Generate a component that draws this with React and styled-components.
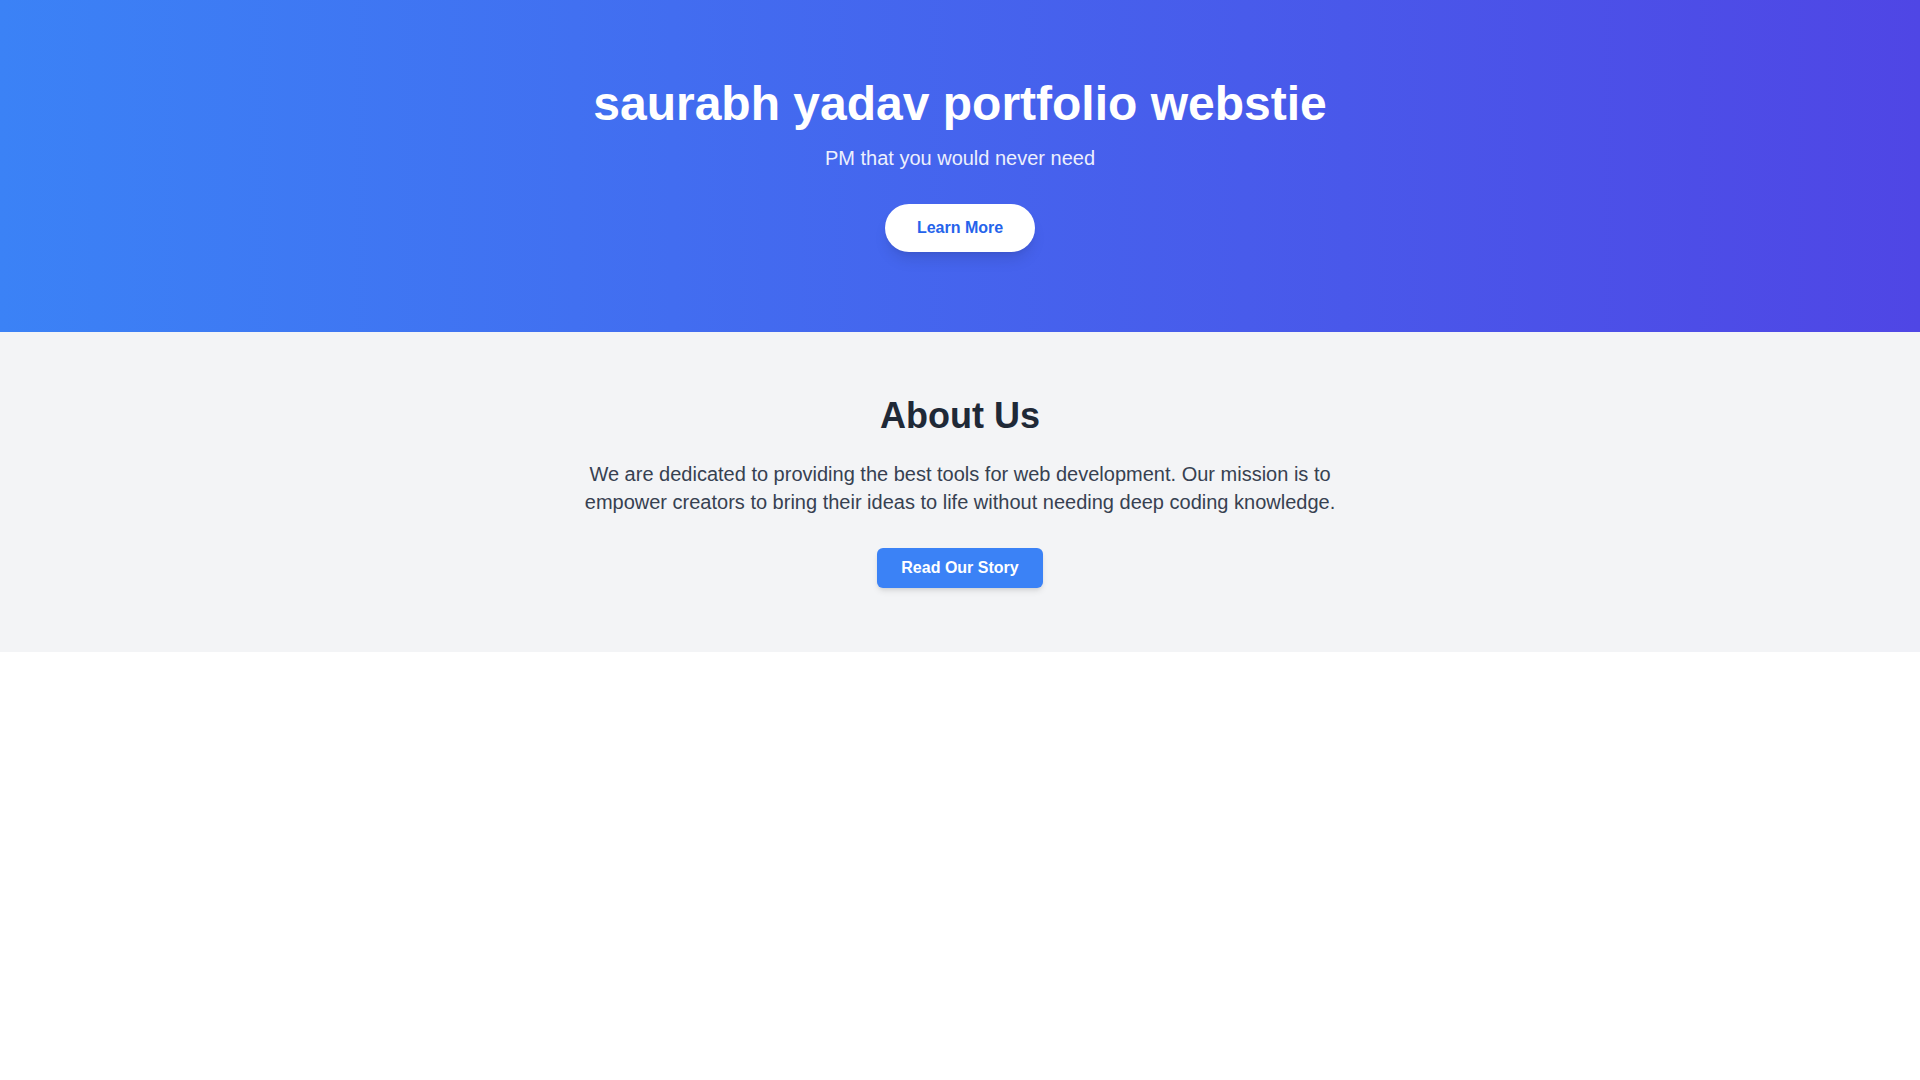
import styled, { createGlobalStyle } from "styled-components";

const GlobalStyle = createGlobalStyle`
  * {
    box-sizing: border-box;
  }
  body {
    margin: 0;
    background: #ffffff;
    font-family: "Liberation Sans", Arial, sans-serif;
  }
`;

const App = () => {
  return (
    <>
      <GlobalStyle />
      <Hero>
        <HeroTitle>saurabh yadav portfolio webstie</HeroTitle>
        <HeroText>PM that you would never need</HeroText>
        <PillButton>Learn More</PillButton>
      </Hero>
      <About>
        <AboutTitle>About Us</AboutTitle>
        <AboutText>
          We are dedicated to providing the best tools for web development. Our
          mission is to empower creators to bring their ideas to life without
          needing deep coding knowledge.
        </AboutText>
        <StoryButton>Read Our Story</StoryButton>
      </About>
    </>
  );
};

export default App;

const Hero = styled.header`
  display: flex;
  flex-direction: column;
  align-items: center;
  padding: 80px 16px;
  background: linear-gradient(to right, #3b82f6, #4f46e5);
  color: #ffffff;
  text-align: center;
`;

const HeroTitle = styled.h1`
  margin: 0 0 16px;
  font-size: 48px;
  line-height: 48px;
  font-weight: 700;
`;

const HeroText = styled.p`
  margin: 0 0 32px;
  font-size: 20px;
  line-height: 28px;
  opacity: 0.9;
`;

const PillButton = styled.button`
  padding: 12px 32px;
  border: none;
  border-radius: 9999px;
  background: #ffffff;
  color: #2563eb;
  font-family: inherit;
  font-size: 16px;
  line-height: 24px;
  font-weight: 700;
  cursor: pointer;
  box-shadow: 0 10px 15px -3px rgba(0, 0, 0, 0.1),
    0 4px 6px -4px rgba(0, 0, 0, 0.1);
`;

const About = styled.section`
  display: flex;
  flex-direction: column;
  align-items: center;
  padding: 64px 16px;
  background: #f3f4f6;
  text-align: center;
`;

const AboutTitle = styled.h2`
  margin: 0 0 24px;
  font-size: 36px;
  line-height: 40px;
  font-weight: 700;
  color: #1f2937;
`;

const AboutText = styled.p`
  max-width: 768px;
  margin: 0 0 32px;
  font-size: 20px;
  line-height: 28px;
  color: #374151;
`;

const StoryButton = styled.button`
  padding: 8px 24px;
  border: none;
  border-radius: 6px;
  background: #3b82f6;
  color: #ffffff;
  font-family: inherit;
  font-size: 16px;
  line-height: 24px;
  font-weight: 700;
  cursor: pointer;
  box-shadow: 0 4px 6px -1px rgba(0, 0, 0, 0.1),
    0 2px 4px -2px rgba(0, 0, 0, 0.1);
`;
